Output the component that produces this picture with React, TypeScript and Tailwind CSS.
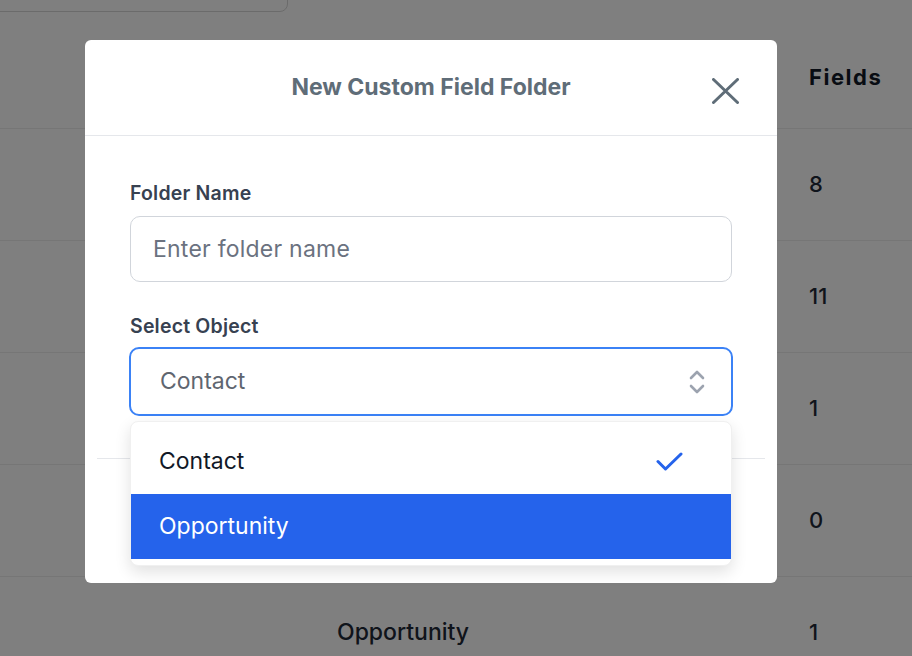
import React from "react";

const rows = [
  { object: "", fields: "8" },
  { object: "", fields: "11" },
  { object: "", fields: "1" },
  { object: "", fields: "0" },
  { object: "Opportunity", fields: "1" },
];

/* ── Background page (table behind the dialog) ─────────── */
function FolderTable() {
  return (
    <div className="h-[656px] w-[912px] overflow-hidden bg-white text-[#1f2937]">
      <div className="-mt-[40px] ml-[-20px] h-[52px] w-[308px] rounded-lg border border-[#d6d6d6] bg-white" />
      <div className="grid h-[116px] grid-cols-[809px_1fr] items-center pt-[14px]">
        <div />
        <div className="text-[22px] font-bold tracking-[0.07em] text-[#111827]">Fields</div>
      </div>
      {rows.map((row, i) => (
        <div
          key={i}
          className="grid h-[112px] grid-cols-[809px_1fr] items-center border-t border-[#ececec]"
        >
          <div className="pl-[337px] text-[23px] font-medium">{row.object}</div>
          <div className="text-[22px] font-medium">{row.fields}</div>
        </div>
      ))}
    </div>
  );
}

/* ── Icons ──────────────────────────────────────────────── */
function CloseIcon() {
  return (
    <svg width="27" height="26" viewBox="0 0 27 26" fill="none">
      <path d="M1.5 1.5L25.5 24.5M25.5 1.5L1.5 24.5" stroke="#5f6d78" strokeWidth="3" strokeLinecap="round" />
    </svg>
  );
}

function SortIcon() {
  return (
    <svg width="18" height="26" viewBox="0 0 18 26" fill="none">
      <path d="M3 9L9 3L15 9M3 17L9 23L15 17" stroke="#9ca3af" strokeWidth="2.6" strokeLinecap="round" strokeLinejoin="round" />
    </svg>
  );
}

function CheckIcon() {
  return (
    <svg width="27" height="19" viewBox="0 0 27 19" fill="none">
      <path d="M2 9.5L9.5 17L25 2" stroke="#2563eb" strokeWidth="3" strokeLinecap="round" strokeLinejoin="round" />
    </svg>
  );
}

/* ── Dialog ─────────────────────────────────────────────── */
function NewFolderDialog() {
  return (
    <div className="absolute left-[85px] top-[40px] flex h-[543px] w-[692px] flex-col rounded-md bg-white">
      <div className="relative flex h-[96px] items-center justify-center border-b border-[#e5e7eb]">
        <h2 className="text-[23px] font-bold text-[#5f6d78]">New Custom Field Folder</h2>
        <button className="absolute right-[38px] top-[38px]">
          <CloseIcon />
        </button>
      </div>

      <div className="relative flex-1 px-[45px] pt-[45px]">
        <label className="block text-[19.5px] font-semibold leading-[24px] tracking-[0.01em] text-[#374151]">Folder Name</label>
        <div className="mt-[11px] flex h-[66px] items-center rounded-[10px] border border-[#d1d5db] px-[22px] text-[23px] tracking-[0.01em] text-[#6b7280]">
          Enter folder name
        </div>

        <label className="mt-[32px] block text-[19.5px] font-semibold leading-[24px] tracking-[0.01em] text-[#374151]">Select Object</label>
        <div className="ml-[-1px] mr-[-1px] mt-[9px] flex h-[69px] items-center justify-between rounded-[10px] border-2 border-[#3b82f6] pl-[29px] pr-[25px] text-[23px] text-[#5f6670]">
          <span>Contact</span>
          <SortIcon />
        </div>

        <div className="mx-[-33px] mt-[42px] border-t border-[#e5e7eb]" />

        {/* open listbox */}
        <div className="absolute left-[45px] right-[45px] top-[285px] rounded-lg border border-[#f0f0f0] bg-white py-[6px] shadow-[0_6px_16px_rgba(0,0,0,0.12)]">
          <div className="flex h-[66px] items-center justify-between pl-[28px] pr-[48px] text-[23px] text-[#111827]">
            <span>Contact</span>
            <CheckIcon />
          </div>
          <div className="flex h-[65px] items-center bg-[#2563eb] pl-[28px] text-[23px] text-white">Opportunity</div>
        </div>
      </div>
    </div>
  );
}

export default function App() {
  return (
    <div className="relative h-[656px] w-[912px] overflow-hidden font-['Inter','Liberation_Sans',sans-serif]">
      <FolderTable />
      <div className="absolute inset-0 bg-black/50" />
      <NewFolderDialog />
    </div>
  );
}
